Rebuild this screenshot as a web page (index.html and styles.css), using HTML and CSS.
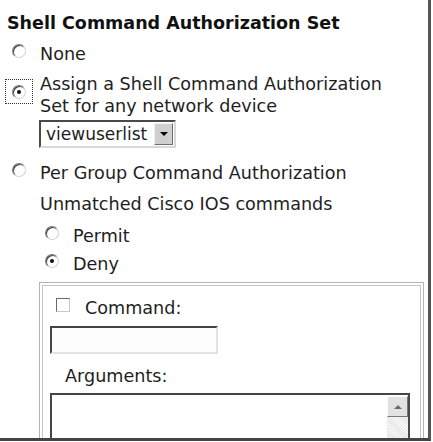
FILE: index.html
```html
<!DOCTYPE html>
<html lang="en">
<head>
  <meta charset="UTF-8" />
  <title>Shell Command Authorization Set</title>
  <link rel="stylesheet" href="styles.css">
</head>
<body>
  <div class="page">
    <h2 class="title">Shell Command Authorization Set</h2>

    <div class="opt opt-none">
      <input type="radio" name="shell" class="radio" />
      <label>None</label>
    </div>

    <div class="opt opt-assign">
      <span class="focusbox"><input type="radio" name="shell" class="radio" checked /></span>
      <label>Assign a Shell Command Authorization<br />Set for any network device</label>
    </div>

    <div class="select">
      <span class="select-value">viewuserlist</span>
      <span class="select-btn"><span class="arrow-down"></span></span>
    </div>

    <div class="opt opt-group">
      <input type="radio" name="shell" class="radio" />
      <label>Per Group Command Authorization</label>
    </div>

    <div class="unmatched">Unmatched Cisco IOS commands</div>

    <div class="sub">
      <div class="opt">
        <input type="radio" name="ios" class="radio" />
        <label>Permit</label>
      </div>
      <div class="opt">
        <input type="radio" name="ios" class="radio" checked />
        <label>Deny</label>
      </div>
    </div>

    <div class="box">
      <div class="cmd-row">
        <input type="checkbox" class="check" />
        <label>Command:</label>
      </div>
      <input type="text" class="text-input" />
      <div class="args-label">Arguments:</div>
      <div class="textarea">
        <div class="scroll">
          <span class="scroll-up"><span class="arrow-up"></span></span>
        </div>
      </div>
    </div>
  </div>
</body>
</html>
```

FILE: styles.css
```css
body {
  margin: 0;
  background: #fff;
  font-family: 'DejaVu Sans', Verdana, sans-serif;
  font-size: 17.6px;
  line-height: 22px;
  color: #1e1e1e;
  overflow: hidden;
}
.page {
  width: 428px;
  height: 438px;
  border-right: 3px solid #555;
  border-bottom: 3px solid #444;
  overflow: hidden;
}
.title {
  margin: 0;
  padding: 12px 0 0 7px;
  font-size: 17.5px;
  font-weight: bold;
  line-height: 22px;
  color: #111;
}
.opt {
  display: flex;
  align-items: flex-start;
}
.opt label {
  margin-left: 14px;
}
.opt > .radio {
  margin: 1px 0 0 12px;
}
.radio {
  appearance: none;
  -webkit-appearance: none;
  position: relative;
  flex: none;
  width: 14px;
  height: 14px;
  margin: 0;
  border-radius: 50%;
  border: 1px solid;
  border-color: #7a7a7a #d4d4d4 #d4d4d4 #7a7a7a;
  background: #fff;
  box-shadow: inset 1px 1px 0 #3c3c3c;
}
.radio:checked::after {
  content: "";
  position: absolute;
  left: 4px;
  top: 4px;
  width: 4px;
  height: 4px;
  border-radius: 50%;
  background: #111;
}
.opt-none {
  margin-top: 9px;
}
.opt-assign {
  margin-top: 8px;
}
.focusbox {
  display: flex;
  align-items: center;
  justify-content: center;
  flex: none;
  width: 28px;
  height: 25px;
  margin: 6px 0 0 5px;
  box-sizing: border-box;
  border: 1px dotted #333;
}
.opt-assign label {
  margin-left: 7px;
}
.select {
  display: flex;
  margin: 3px 0 0 39px;
  width: 137px;
  height: 28px;
  box-sizing: border-box;
  border: 2px solid;
  border-color: #4a4a4a #d8d8d8 #d8d8d8 #4a4a4a;
  background: #fff;
  font-size: 17px;
  line-height: 24px;
}
.select-value {
  flex: 1;
  padding-left: 5px;
}
.select-btn {
  display: flex;
  align-items: center;
  justify-content: center;
  width: 17px;
  margin: 1px 1px 1px 0;
  background: #cfcfcf;
  border: 1px solid;
  border-color: #f2f2f2 #6e6e6e #6e6e6e #f2f2f2;
}
.arrow-down {
  width: 0;
  height: 0;
  border-left: 4px solid transparent;
  border-right: 4px solid transparent;
  border-top: 4px solid #000;
}
.opt-group {
  margin-top: 14px;
}
.unmatched {
  margin: 9px 0 0 40px;
}
.sub {
  display: flex;
  flex-direction: column;
  gap: 6px;
  margin: 10px 0 0 33px;
}
.sub .opt label {
  margin-left: 14px;
}
.box {
  margin: 7px 0 0 39px;
  width: 385px;
  height: 170px;
  box-sizing: border-box;
  border: 1px solid #b4b4b4;
  box-shadow: inset 0 0 0 2px #fff, inset 0 0 0 3px #c4c4c4;
  padding: 14px 0 0 10px;
}
.cmd-row {
  display: flex;
  align-items: flex-start;
  padding-left: 6px;
}
.check {
  appearance: none;
  -webkit-appearance: none;
  flex: none;
  width: 14px;
  height: 14px;
  margin: 1px 15px 0 0;
  border: 1px solid;
  border-color: #6a6a6a #c8c8c8 #c8c8c8 #6a6a6a;
  background: #fff;
}
.text-input {
  display: block;
  margin-top: 7px;
  width: 168px;
  height: 28px;
  box-sizing: border-box;
  border: 2px solid;
  border-color: #454545 #e2e2e2 #e2e2e2 #454545;
  background: #fdfdfd;
}
.args-label {
  margin: 11px 0 0 15px;
}
.textarea {
  display: flex;
  justify-content: flex-end;
  margin-top: 6px;
  width: 360px;
  height: 80px;
  box-sizing: border-box;
  border: 2px solid;
  border-color: #454545 #4a4a4a #4a4a4a #454545;
  padding: 1px 0 0 0;
}
.scroll {
  width: 21px;
  background: repeating-linear-gradient(45deg, #e6e6e6 0 1px, #f8f8f8 1px 2px);
}
.scroll-up {
  display: flex;
  align-items: center;
  justify-content: center;
  height: 21px;
  box-sizing: border-box;
  background: #e2e2e2;
  border: 1px solid;
  border-color: #fafafa #777 #777 #fafafa;
}
.arrow-up {
  width: 0;
  height: 0;
  border-left: 4px solid transparent;
  border-right: 4px solid transparent;
  border-bottom: 4px solid #6a6a6a;
}
```
